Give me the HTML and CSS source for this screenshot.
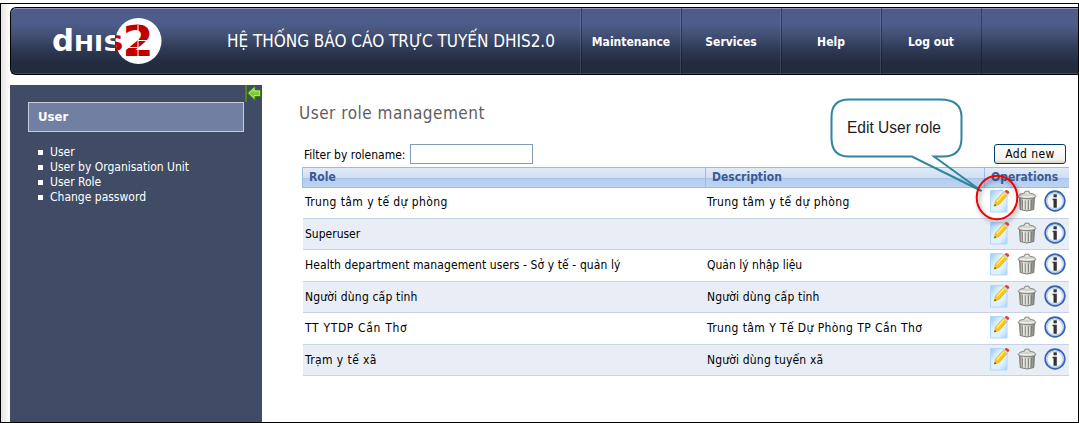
FILE: index.html
```html
<!DOCTYPE html>
<html lang="vi">
<head>
<meta charset="utf-8">
<title>User role management</title>
<link rel="stylesheet" href="styles.css">
</head>
<body>
<svg width="0" height="0" class="defs" aria-hidden="true">
  <defs>
    <linearGradient id="paper" x1="0" y1="0" x2="1" y2="1"><stop offset="0" stop-color="#93c8f2"/><stop offset=".35" stop-color="#dcf0fd"/><stop offset=".7" stop-color="#e0f1fd"/><stop offset="1" stop-color="#a5d4f8"/></linearGradient>
    <linearGradient id="metal"><stop offset="0" stop-color="#8b8b85"/><stop offset=".25" stop-color="#e0e0db"/><stop offset=".6" stop-color="#c6c6c0"/><stop offset="1" stop-color="#82827b"/></linearGradient>
    <linearGradient id="leaf" x1="0" y1="0" x2="0" y2="1"><stop offset="0" stop-color="#a6dc6a"/><stop offset="1" stop-color="#58b80c"/></linearGradient>
    <symbol id="edit" viewBox="0 0 22 24">
      <path d="M1.500 1.500h12l4.500 4.500v17H1.500z" fill="url(#paper)" stroke="#aed8f8"/>
      <path d="M5.500 17l1-5 8.200-9 3.600 3.200-8 9z" fill="#f7c81c" stroke="#d89e18" stroke-width=".6"/>
      <path d="M7.600 12.700l7.700-8.400" stroke="#fff06a" stroke-width="1.400"/>
      <path d="M14.300 3.500l1.500-1.500 3.300 3.100-1.300 1.600z" fill="#d4d4d4"/>
      <path d="M15.500 2.300l1.400-1.300q2.900-.2 3.500 2.600L19 5.300z" fill="#e0402f"/>
      <path d="M5.200 17.300l.6-2.300 1.600 1.400z" fill="#694719"/>
    </symbol>
    <symbol id="trash" viewBox="0 0 20 22">
      <path d="M2.500 6.500l.7 13q6.800 3 13.600 0l.7-13z" fill="url(#metal)" stroke="#74746e" stroke-width=".9"/>
      <path d="M5.400 10l.3 9M8.400 10.500v9M11.500 10.500v9M14.600 10l-.3 9" stroke="#7d7d76" stroke-width=".9"/>
      <path d="M6.400 10l.3 9M9.400 10.500v9M12.500 10.500v9" stroke="#f0f0eb" stroke-width=".8"/>
      <path d="M1 6.600Q1.500 3.800 7.500 3L8 1.200h4L12.500 3q6 .8 6.500 3.600-1 2-9 2t-9-2z" fill="#d3d3ce" stroke="#74746e" stroke-width=".8"/>
      <path d="M3 6q7 2 14 0M8.500 3h3" fill="none" stroke="#f6f6f2"/>
    </symbol>
    <symbol id="info" viewBox="0 0 22 22">
      <circle cx="11" cy="11" r="9.700" fill="#f8fafc" stroke="#3566b0" stroke-width="1.900"/>
      <circle cx="11" cy="11" r="8.200" fill="none" stroke="#b4cdeb" stroke-width="1.200"/>
      <rect x="9.500" y="4.300" width="3.300" height="3" fill="#333"/>
      <path d="M8.600 8.800h4.200v8.900H9.500v-7.400h-.9z" fill="#333"/>
    </symbol>
  </defs>
</svg>
<div class="window">
  <header class="topbar">
    <svg class="logo" viewBox="0 0 114 50" role="img" aria-label="dhis2">
      <linearGradient id="split" gradientUnits="userSpaceOnUse" x1="0" x2="114" y1="0" y2="0"><stop offset=".57" stop-color="#fff"/><stop offset=".57" stop-color="#c00000"/></linearGradient>
      <circle cx="88.500" cy="25" r="23" fill="#fff"/>
      <g class="logo-word">
        <text x="2" y="35" font-size="31" textLength="22" lengthAdjust="spacingAndGlyphs">d</text>
        <text x="24" y="35" font-size="21" textLength="20" lengthAdjust="spacingAndGlyphs">H</text>
        <text x="44" y="35" font-size="21" textLength="9" lengthAdjust="spacingAndGlyphs">I</text>
        <text x="53" y="35" font-size="21" textLength="21" lengthAdjust="spacingAndGlyphs" fill="url(#split)">S</text>
      </g>
      <text class="logo-two" x="72.500" y="40" font-size="42" textLength="31" lengthAdjust="spacingAndGlyphs">2</text>
      <path d="M88 9v31M88 24.500h15M75 31.500h13" stroke="#fff" stroke-width="1"/>
    </svg>
    <div class="system-name"><span>HỆ THỐNG BÁO CÁO TRỰC TUYẾN DHIS2.0</span></div>
    <nav class="menu">
      <a>Maintenance</a><a>Services</a><a>Help</a><a>Log out</a>
    </nav>
  </header>
  <div class="body">
    <aside class="sidebar">
      <svg class="collapse" viewBox="0 0 17 17"><path d="M1 0v17" stroke="#4e8714" stroke-width="2"/><path d="M2.500 8l7.500-7v4h5.500v6.500H10v4z" fill="url(#leaf)" stroke="#3f8205"/><path d="M4 8l5-4.700V6h5.500v4.500H9v2.700z" fill="none" stroke="#b9e68d" stroke-width=".9"/></svg>
      <h2>User</h2>
      <ul>
        <li>User</li>
        <li>User by Organisation Unit</li>
        <li>User Role</li>
        <li>Change password</li>
      </ul>
    </aside>
    <main>
      <h1>User role management</h1>
      <div class="toolbar">
        <label><span>Filter by rolename:</span><input type="text"></label>
        <button>Add new</button>
      </div>
      <div class="grid head"><div>Role</div><div>Description</div><div>Operations</div></div>
      <div class="rows">
        <div class="grid row"><div class="w4">Trung tâm y tế dự phòng</div><div class="w4">Trung tâm y tế dự phòng</div><div class="ops"><svg><use href="#edit"/></svg><svg><use href="#trash"/></svg><svg><use href="#info"/></svg></div></div>
        <div class="grid row"><div>Superuser</div><div></div><div class="ops"><svg><use href="#edit"/></svg><svg><use href="#trash"/></svg><svg><use href="#info"/></svg></div></div>
        <div class="grid row"><div class="w1">Health department management users - Sở y tế - quản lý</div><div>Quản lý nhập liệu</div><div class="ops"><svg><use href="#edit"/></svg><svg><use href="#trash"/></svg><svg><use href="#info"/></svg></div></div>
        <div class="grid row"><div class="w2">Người dùng cấp tỉnh</div><div class="w2">Người dùng cấp tỉnh</div><div class="ops"><svg><use href="#edit"/></svg><svg><use href="#trash"/></svg><svg><use href="#info"/></svg></div></div>
        <div class="grid row"><div class="w6">TT YTDP Cần Thơ</div><div class="w4">Trung tâm Y Tế Dự Phòng TP Cần Thơ</div><div class="ops"><svg><use href="#edit"/></svg><svg><use href="#trash"/></svg><svg><use href="#info"/></svg></div></div>
        <div class="grid row"><div class="w4">Trạm y tế xã</div><div class="w2">Người dùng tuyến xã</div><div class="ops"><svg><use href="#edit"/></svg><svg><use href="#trash"/></svg><svg><use href="#info"/></svg></div></div>
      </div>
    </main>
  </div>
</div>
<svg class="callout" viewBox="0 0 200 130">
  <path d="M24 4.500H115Q136.500 4.500 136.500 22V43Q136.500 61.500 118 61.500H109L156.500 96 87 61.500H24Q6.500 61.500 6.500 43V22Q6.500 4.500 24 4.500z" fill="none" stroke="#31859c" stroke-width="2"/>
  <text x="22" y="38" textLength="94" lengthAdjust="spacingAndGlyphs">Edit User role</text>
  <ellipse class="ring" cx="172" cy="102.500" rx="20.300" ry="21.800"/>
</svg>
</body>
</html>
```
FILE: styles.css
```css
* { box-sizing: border-box; }
body {
  margin: 0;
  height: 423px;
  overflow: hidden;
  padding-top: 3px;
  background: #fff;
  font-family: "DejaVu Sans Condensed", "DejaVu Sans", sans-serif;
  font-stretch: condensed;
  font-size: 12px;
  color: #000;
}
.defs { position: absolute; }
.window {
  height: 420px;
  border: 1px solid #000;
  padding: 3px 0 0 9px;
  background: linear-gradient(90deg, #e4e4e4, #fff 9px);
  overflow: hidden;
}
.topbar {
  height: 68px;
  display: flex;
  border: 1px solid #000;
  border-right: 0;
  border-radius: 6px 0 0 6px;
  background: linear-gradient(#515b86, #4d5d8b 22%, #465379 38%, #303c58 60%, #232c40 82%, #232b3e);
  box-shadow: inset 0 1px #8f8fc0, inset 0 -1px #464663;
  color: #fff;
}
.logo { flex: none; width: 114px; height: 50px; margin: 8px 0 0 39px; }
.logo-word { fill: #fff; font-family: "DejaVu Sans", sans-serif; font-weight: bold; }
.logo-two { fill: #c00000; font-family: "DejaVu Sans", sans-serif; font-weight: bold; }
.system-name { flex: none; width: 417px; padding-left: 63px; line-height: 67px; font-size: 17px; letter-spacing: -.02px; white-space: nowrap; }
.menu { display: flex; flex: 1; }
.menu a {
  width: 100px;
  line-height: 68px;
  text-align: center;
  font-weight: bold;
  font-size: 12px;
  box-shadow: inset 1px 0 rgba(10, 16, 38, .4), -1px 0 rgba(130, 145, 180, .25);
}
.menu a:last-child { box-shadow: inset 1px 0 rgba(10, 16, 38, .4), -1px 0 rgba(130, 145, 180, .25), 1px 0 rgba(10, 16, 38, .4); }
.body { display: flex; height: 348px; padding-top: 10px; background: #fff; }
.sidebar { position: relative; width: 252px; background: #404c66; padding: 17px 18px; color: #fff; }
.collapse { position: absolute; left: 235px; top: 0; width: 17px; height: 17px; }
h2 {
  margin: 0;
  height: 30px;
  border: 1px solid #c9ccd6;
  background: #717fa3;
  padding-left: 9px;
  font-size: 13px;
  line-height: 28px;
}
ul { list-style: none; margin: 12px 0 0; padding: 0 0 0 10px; }
li { display: flex; align-items: center; height: 15px; white-space: nowrap; }
li::before { content: ""; width: 5px; height: 5px; margin: 2px 7px 0 0; background: #fff; }
main { width: 807px; padding: 0 0 0 40px; background: #fff; }
h1 { margin: 0 0 0 -3px; padding-top: 16px; height: 59px; font-size: 17px; line-height: 24px; font-weight: normal; letter-spacing: .5px; color: #606060; white-space: nowrap; }
.toolbar { display: flex; justify-content: space-between; height: 23px; padding: 0 3px 0 2px; }
label { display: flex; line-height: 22px; white-space: nowrap; }
label span { width: 106px; }
input { width: 123px; height: 20px; border: 1px solid #7f9db9; padding: 0; background: #fff; }
button {
  width: 72px;
  height: 20px;
  border: 1px solid #003c74;
  border-radius: 3px;
  padding: 0;
  background: linear-gradient(#fff, #f4f3ee 80%, #d9d5cc);
  font: inherit;
  line-height: 18px;
  letter-spacing: .4px;
}
.grid { display: grid; grid-template-columns: 403px 279px 85px; white-space: nowrap; }
.head { height: 20px; font-weight: bold; color: #3c5a96; }
.head div {
  padding-left: 6px;
  border: solid #99bbe8;
  border-width: 1px 0 1px 1px;
  line-height: 19px;
  background: linear-gradient(#dfebf8, #cfdff2 55%, #a9c5ec 55%, #b5cdef 61%, #bcd3f2);
}
.rows { height: 189px; display: grid; grid-template-rows: 32px 31px 32px 31px 32px 31px; }
.row { border-bottom: 1px solid #c6d3e6; margin-left: 1px; grid-template-columns: 402px 279px 84px; line-height: 31px; }
.row:nth-child(even) { background: #e9eef6; }
.row > div { padding-left: 2px; }
.w1 { letter-spacing: .1px; }
.w2 { letter-spacing: .17px; }
.w4 { letter-spacing: .41px; }
.w6 { letter-spacing: .66px; }
.row > .ops { display: flex; padding: 2px 0 0 5px; }
.ops svg { flex: none; width: 22px; height: 24px; }
.ops svg:nth-child(2) { width: 20px; height: 22px; margin: 1px 0 0 6px; }
.ops svg:nth-child(3) { width: 22px; height: 22px; margin: 1px 0 0 7px; }
.callout { position: absolute; left: 825px; top: 95px; width: 200px; height: 130px; overflow: visible; }
.callout text { font: 16px "Liberation Sans", Arial, sans-serif; fill: #1c1c1c; }
.ring { fill: none; stroke: #f40000; stroke-width: 2; filter: drop-shadow(2px 3px 2px rgba(0, 0, 0, .4)); }
```
